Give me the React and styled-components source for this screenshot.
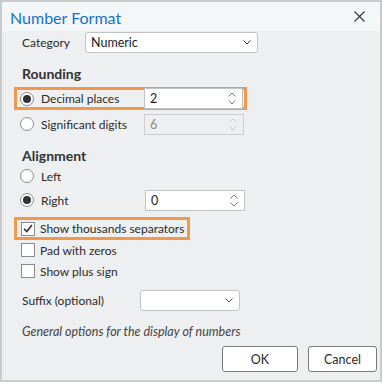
import React from "react";
import styled, { createGlobalStyle } from "styled-components";

const GlobalStyle = createGlobalStyle`
  body {
    margin: 0;
    background: #ffffff;
    font-family: Lato, "Noto Sans", sans-serif;
  }
`;

const Window = styled.div`
  width: 382px;
  height: 382px;
  box-sizing: border-box;
  border: 2px solid #c9cacc;
  background: #eeeff1;
  display: flex;
  flex-direction: column;
  color: #2b2b2b;
  font-size: 12px;
`;

const TitleBar = styled.div`
  height: 29px;
  background: #f4f7f7;
  display: flex;
  align-items: center;
  justify-content: space-between;
  padding: 0 15px 0 8px;
`;

const Title = styled.div`
  color: #1672c6;
  font-size: 16px;
  margin-top: 1px;
`;

const Body = styled.div`
  flex: 1;
  display: flex;
  flex-direction: column;
  padding: 0 3px 0 20px;
`;

const Row = styled.div`
  display: flex;
  align-items: center;
  height: ${p => p.h || 22}px;
  margin-top: ${p => p.mt || 0}px;
  margin-left: ${p => p.ml || 0}px;
`;

const Label = styled.div`
  width: ${p => p.w}px;
  flex: none;
  white-space: nowrap;
`;

const Heading = styled.div`
  height: ${p => p.h || 22}px;
  margin-top: ${p => p.mt}px;
  display: flex;
  align-items: center;
  font-size: 14px;
  font-weight: 700;
  color: #333;
`;

const Highlight = styled.div`
  width: ${p => p.w}px;
  height: 23px;
  box-sizing: border-box;
  border: 3px solid #f0994b;
  margin-left: -8px;
  margin-top: ${p => p.mt}px;
  padding-left: ${p => p.pl}px;
  display: flex;
  align-items: center;
`;

const RadioCircle = styled.span`
  width: 14px;
  height: 14px;
  box-sizing: border-box;
  border-radius: 50%;
  border: 1px solid #8c8c8c;
  background: #fff;
  display: inline-flex;
  align-items: center;
  justify-content: center;
  flex: none;
  margin-right: 7px;
  &::after {
    content: "";
    width: 8px;
    height: 8px;
    border-radius: 50%;
    background: ${p => (p.checked ? "#333" : "transparent")};
  }
`;

const Box = styled.span`
  width: 14px;
  height: 14px;
  box-sizing: border-box;
  border: 1px solid #8c8c8c;
  background: #fff;
  display: inline-flex;
  align-items: center;
  justify-content: center;
  flex: none;
  margin-right: 5px;
`;

const OptionText = styled.span`
  white-space: nowrap;
  width: ${p => (p.w ? p.w + "px" : "auto")};
  flex: none;
`;

const Field = styled.div`
  width: ${p => p.w}px;
  height: ${p => p.h || 21}px;
  box-sizing: border-box;
  border: 1px solid ${p => (p.disabled ? "#cdcdcd" : "#c3c3c3")};
  background: ${p => (p.disabled ? "#eeeff1" : "#fff")};
  color: ${p => (p.disabled ? "#8a8a8a" : "#1b1b1b")};
  border-radius: ${p => (p.round ? 3 : 0)}px;
  display: flex;
  align-items: center;
  justify-content: space-between;
  padding: 0 6px 0 5px;
  font-size: 12.5px;
`;

const Spin = styled.div`
  display: flex;
  flex-direction: column;
  gap: 3px;
`;

const Note = styled.div`
  font-style: italic;
  font-size: 12.5px;
  color: #444;
  height: 20px;
  margin-top: 10px;
  display: flex;
  align-items: center;
`;

const Buttons = styled.div`
  display: flex;
  justify-content: flex-end;
  gap: 10px;
  margin-top: 5px;
`;

const Button = styled.button`
  width: ${p => p.w}px;
  height: 26px;
  box-sizing: border-box;
  border: 1px solid #7a7a7a;
  border-radius: 3px;
  background: #fff;
  font-family: inherit;
  font-size: 12.5px;
  color: #2b2b2b;
  padding: 0;
`;

const Chevron = ({ up, color = "#7a7a7a", w = 8 }) => (
  <svg width={w} height="5" viewBox="0 0 8 5">
    <path
      d={up ? "M0.5 4.5 L4 1 L7.5 4.5" : "M0.5 0.5 L4 4 L7.5 0.5"}
      fill="none"
      stroke={color}
      strokeWidth="1"
    />
  </svg>
);

const Spinner = ({ disabled }) => (
  <Spin>
    <Chevron up color={disabled ? "#cacaca" : "#7a7a7a"} />
    <Chevron color={disabled ? "#cacaca" : "#7a7a7a"} />
  </Spin>
);

const Radio = ({ checked, children, w }) => (
  <>
    <RadioCircle checked={checked} />
    <OptionText w={w}>{children}</OptionText>
  </>
);

const Check = ({ checked, children }) => (
  <>
    <Box>
      {checked && (
        <svg width="10" height="9" viewBox="0 0 10 9">
          <path d="M1 4.8 L3.8 7.5 L9 1" fill="none" stroke="#333" strokeWidth="1.6" />
        </svg>
      )}
    </Box>
    <OptionText>{children}</OptionText>
  </>
);

export default function App() {
  return (
    <>
      <GlobalStyle />
      <Window>
        <TitleBar>
          <Title>Number Format</Title>
          <svg width="11" height="11" viewBox="0 0 11 11">
            <path d="M0.5 0.5 L10.5 10.5 M10.5 0.5 L0.5 10.5" stroke="#3a3a3a" strokeWidth="1.2" />
          </svg>
        </TitleBar>
        <Body>
          <Row h={22}>
            <Label w={63}>Category</Label>
            <Field w={173} round>
              <span>Numeric</span>
              <Chevron color="#333" w={8} />
            </Field>
          </Row>

          <Heading mt={9}>Rounding</Heading>
          <Highlight w={233} mt={3} pl={3}>
            <Radio checked w={103}>Decimal places</Radio>
            <Field w={99} h={21}>
              <span>2</span>
              <Spinner />
            </Field>
          </Highlight>
          <Row h={22} mt={3} ml={-2}>
            <Radio w={103}>Significant digits</Radio>
            <Field w={100} disabled>
              <span>6</span>
              <Spinner disabled />
            </Field>
          </Row>

          <Heading mt={10} h={20}>Alignment</Heading>
          <Row h={22} ml={-2}>
            <Radio>Left</Radio>
          </Row>
          <Row h={22} mt={2} ml={-2}>
            <Radio checked w={104}>Right</Radio>
            <Field w={100}>
              <span>0</span>
              <Spinner />
            </Field>
          </Row>

          <Highlight w={176} mt={6} pl={4}>
            <Check checked>Show thousands separators</Check>
          </Highlight>
          <Row h={20} ml={-1}>
            <Check>Pad with zeros</Check>
          </Row>
          <Row h={20} mt={1} ml={-1}>
            <Check>Show plus sign</Check>
          </Row>

          <Row h={22} mt={8}>
            <Label w={118}>Suffix (optional)</Label>
            <Field w={100} round>
              <span />
              <Chevron color="#555" w={8} />
            </Field>
          </Row>

          <Note>General options for the display of numbers</Note>

          <Buttons>
            <Button w={76}>OK</Button>
            <Button w={69}>Cancel</Button>
          </Buttons>
        </Body>
      </Window>
    </>
  );
}
